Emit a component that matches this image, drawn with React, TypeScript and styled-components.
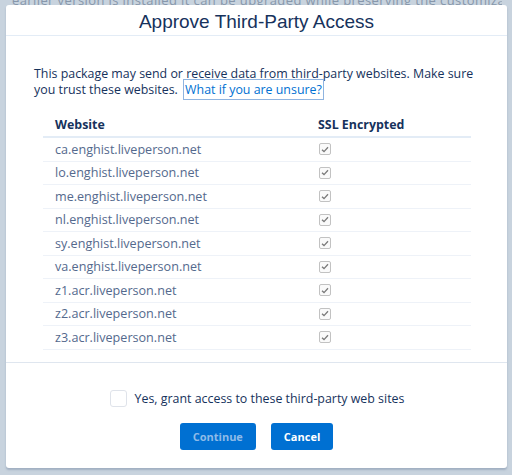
import React from "react";
import styled, { createGlobalStyle } from "styled-components";

const Global = createGlobalStyle`
  html, body { margin: 0; padding: 0; }
  body {
    width: 512px;
    height: 475px;
    overflow: hidden;
    background: #c8d3de;
    font-family: "Open Sans", "Noto Sans", sans-serif;
  }
`;

const Backdrop = styled.div`
  position: relative;
  width: 512px;
  height: 475px;
  background: #c8d3de;
  overflow: hidden;
`;

const BehindText = styled.div`
  position: absolute;
  top: -9px;
  left: 12px;
  width: 490px;
  overflow: hidden;
  white-space: nowrap;
  font-size: 13px;
  color: #8797ab;
  letter-spacing: 0.4px;
`;

const Modal = styled.div`
  position: absolute;
  left: 6px;
  top: 5px;
  width: 501px;
  height: 463px;
  background: #fff;
  border-radius: 3px;
  box-shadow: 0 2px 2px rgba(90, 110, 140, 0.35);
  display: flex;
  flex-direction: column;
`;

const Header = styled.div`
  height: 31px;
  box-sizing: border-box;
  border-bottom: 1px solid #e3ecf6;
  display: flex;
  align-items: center;
  justify-content: center;
`;

const Title = styled.h2`
  margin: 0;
  font-family: "Liberation Sans", Arial, sans-serif;
  font-weight: 400;
  font-size: 19px;
  color: #16325c;
  padding-top: 3px;
`;

const Body = styled.div`
  padding: 30px 30px 0 28px;
  height: 327px;
  box-sizing: border-box;
  border-bottom: 1px solid #dfe6ef;
`;

const Intro = styled.p`
  margin: 0;
  font-size: 12.4px;
  line-height: 16px;
  color: #16325c;
`;

const Link = styled.a`
  color: #0070d2;
  text-decoration: none;
  outline: 1px solid #8fb4e0;
  outline-offset: 1px;
  margin-left: 4px;
`;

const Table = styled.div`
  margin: 14px 6px 0 9px;
  display: grid;
  grid-template-columns: 263px 1fr;
`;

const HeadCell = styled.div`
  height: 26px;
  box-sizing: border-box;
  border-bottom: 2px solid #e3ecf6;
  padding-left: 12px;
  display: flex;
  align-items: center;
  font-size: 12.4px;
  font-weight: 700;
  color: #16325c;
`;

const Cell = styled.div`
  height: 23.5px;
  box-sizing: border-box;
  border-bottom: 1px solid #eef2f8;
  padding-left: 12px;
  display: flex;
  align-items: center;
  font-size: 12.6px;
  color: #54698d;
`;

const Check = styled.span`
  width: 12px;
  height: 12px;
  box-sizing: border-box;
  border: 1px solid #c2c2c2;
  border-radius: 2px;
  background: #fafafa;
  display: flex;
  align-items: center;
  justify-content: center;
  margin-left: 1px;
`;

const Footer = styled.div`
  flex: 1;
  display: flex;
  flex-direction: column;
  align-items: center;
  padding-top: 27px;
`;

const Grant = styled.label`
  display: flex;
  align-items: center;
  gap: 8px;
  font-size: 12.4px;
  color: #16325c;
  margin-left: 1px;
`;

const BigBox = styled.span`
  width: 17px;
  height: 17px;
  box-sizing: border-box;
  border: 1px solid #dfe3ea;
  border-radius: 3px;
  background: #fff;
`;

const Buttons = styled.div`
  display: flex;
  gap: 15px;
  margin-top: 16px;
`;

const Button = styled.button<{ $disabled?: boolean }>`
  height: 27px;
  padding: 0 13px;
  border: none;
  border-radius: 3px;
  background: #0070d2;
  color: ${(p) => (p.$disabled ? "#8fbbe8" : "#ffffff")};
  font-family: "Open Sans", "Noto Sans", sans-serif;
  font-weight: 700;
  font-size: 11px;
  cursor: pointer;
`;

const CheckMark = () => (
  <svg width="8" height="7" viewBox="0 0 8 7">
    <path d="M1 3.8 L3 5.6 L7 1.2" fill="none" stroke="#7a7a7a" strokeWidth="1.3" />
  </svg>
);

const sites = [
  "ca.enghist.liveperson.net",
  "lo.enghist.liveperson.net",
  "me.enghist.liveperson.net",
  "nl.enghist.liveperson.net",
  "sy.enghist.liveperson.net",
  "va.enghist.liveperson.net",
  "z1.acr.liveperson.net",
  "z2.acr.liveperson.net",
  "z3.acr.liveperson.net",
];

export default function App() {
  return (
    <>
      <Global />
      <Backdrop>
        <BehindText>
          earlier version is installed it can be upgraded while preserving the customizations
        </BehindText>
        <Modal>
          <Header>
            <Title>Approve Third-Party Access</Title>
          </Header>
          <Body>
            <Intro>
              This package may send or receive data from third-party websites. Make sure
              you trust these websites. <Link href="#">What if you are unsure?</Link>
            </Intro>
            <Table>
              <HeadCell>Website</HeadCell>
              <HeadCell>SSL Encrypted</HeadCell>
              {sites.map((s) => (
                <React.Fragment key={s}>
                  <Cell>{s}</Cell>
                  <Cell>
                    <Check>
                      <CheckMark />
                    </Check>
                  </Cell>
                </React.Fragment>
              ))}
            </Table>
          </Body>
          <Footer>
            <Grant>
              <BigBox />
              Yes, grant access to these third-party web sites
            </Grant>
            <Buttons>
              <Button $disabled>Continue</Button>
              <Button>Cancel</Button>
            </Buttons>
          </Footer>
        </Modal>
      </Backdrop>
    </>
  );
}
